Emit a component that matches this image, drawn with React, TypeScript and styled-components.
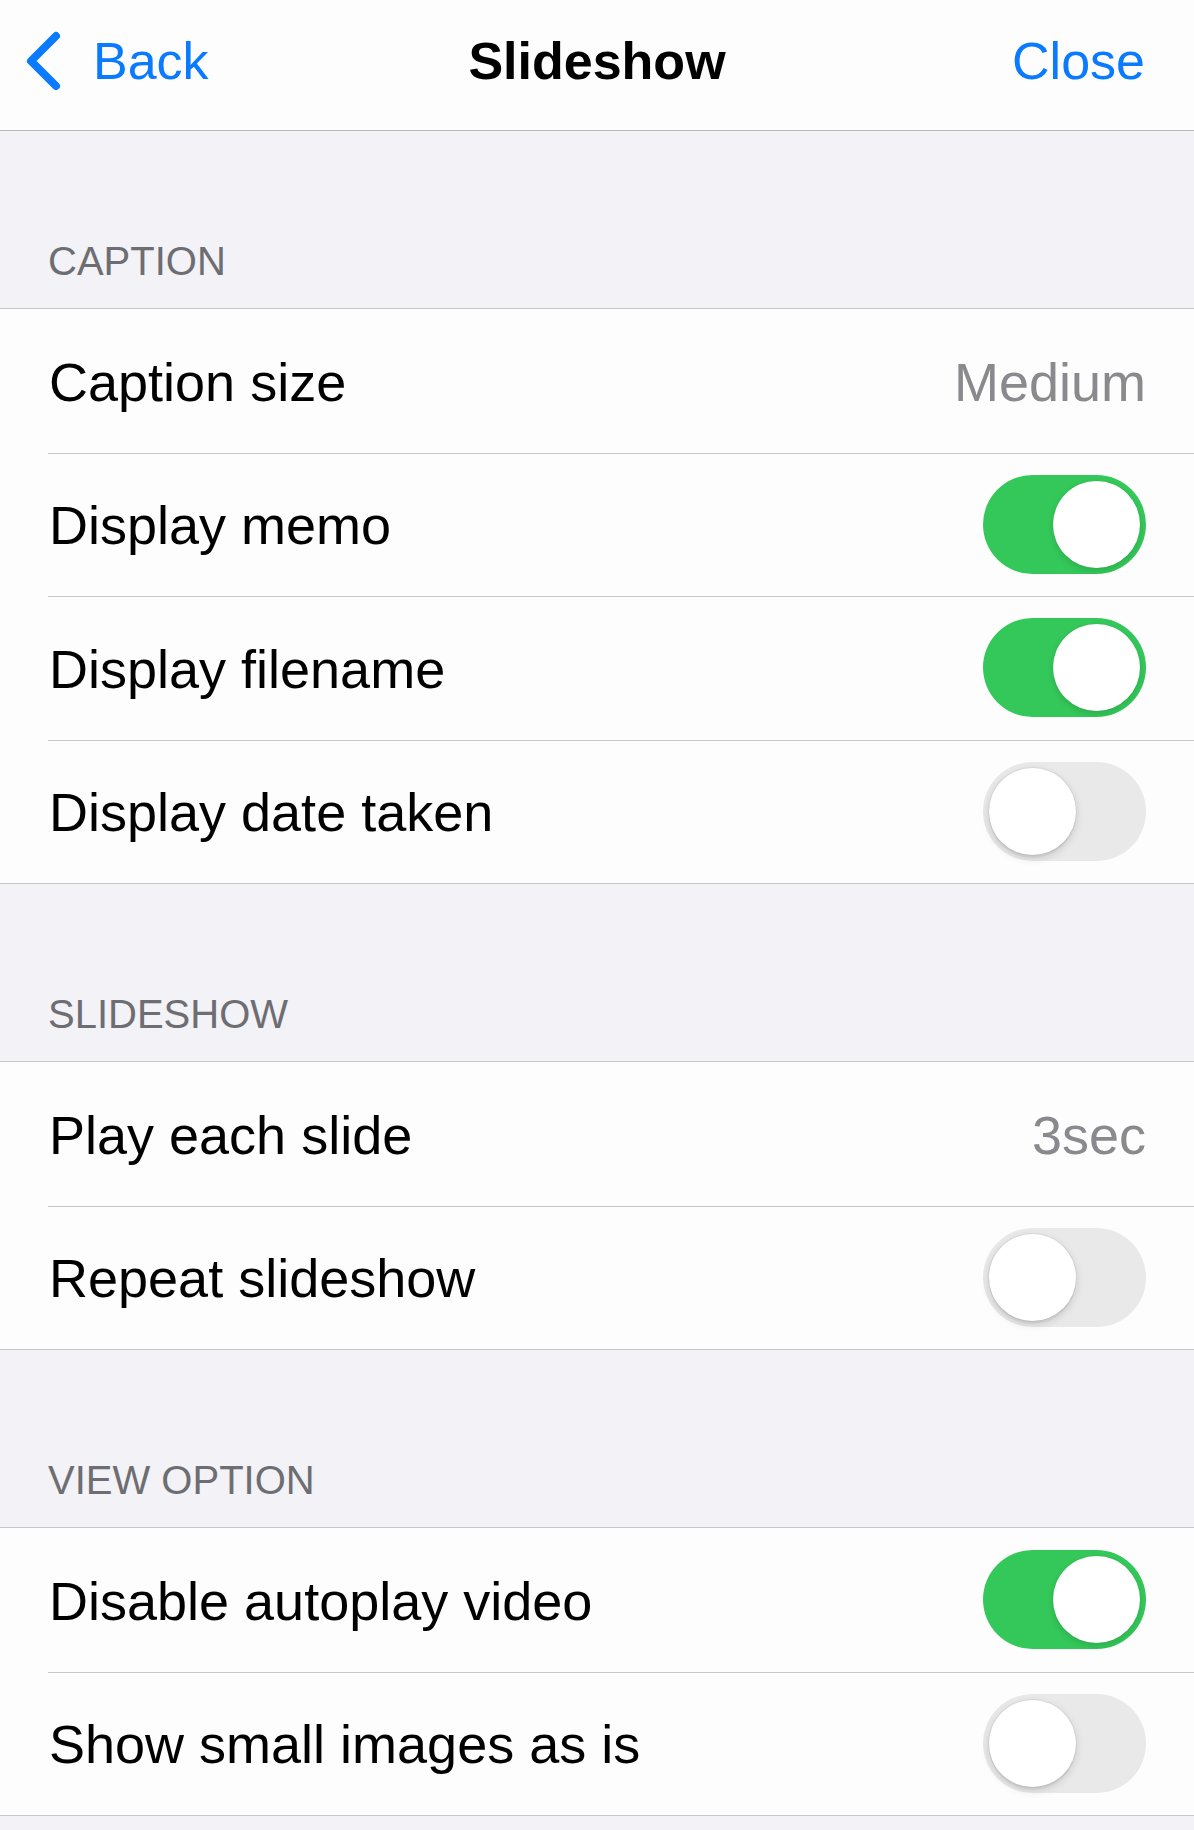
import React from "react";
import styled, { createGlobalStyle } from "styled-components";

const GlobalStyle = createGlobalStyle`
  html, body {
    margin: 0;
    padding: 0;
    background: #f2f2f7;
  }
  body {
    font-family: "Liberation Sans", Arial, sans-serif;
    -webkit-font-smoothing: antialiased;
  }
`;

const Page = styled.div`
  width: 1194px;
  min-height: 1830px;
  background: #f2f2f7;
  display: flex;
  flex-direction: column;
`;

const NavBar = styled.header`
  height: 131px;
  box-sizing: border-box;
  padding: 0 49px 9px 49px;
  background: #fdfdfd;
  border-bottom: 1px solid #b9b9bd;
  display: grid;
  grid-template-columns: 1fr auto 1fr;
  align-items: center;
`;

const NavButton = styled.button<{ $align: "start" | "end" }>`
  justify-self: ${(p) => p.$align};
  margin-left: ${(p) => (p.$align === "start" ? "-24px" : "0")};
  display: flex;
  align-items: center;
  gap: 32px;
  background: none;
  border: none;
  padding: 0;
  font-family: "Liberation Sans", Arial, sans-serif;
  font-size: 52px;
  color: #0a7aff;
  cursor: pointer;
`;

const NavTitle = styled.h1`
  margin: 0;
  font-family: "Liberation Sans", Arial, sans-serif;
  font-size: 52px;
  font-weight: 700;
  color: #000;
`;

const SectionHeader = styled.div`
  height: 177px;
  box-sizing: border-box;
  padding: 0 48px 23px;
  display: flex;
  align-items: flex-end;
  font-size: 40px;
  line-height: 48px;
  color: #6d6d72;
  text-transform: uppercase;
`;

const List = styled.section`
  background: #fdfdfd;
  border-top: 1px solid #c8c8cc;
  border-bottom: 1px solid #c8c8cc;
  display: flex;
  flex-direction: column;
`;

const Row = styled.div`
  position: relative;
  height: 143.5px;
  box-sizing: border-box;
  padding: 2px 48px 0 49px;
  display: flex;
  align-items: center;
  justify-content: space-between;

  & + &::before {
    content: "";
    position: absolute;
    top: 0;
    left: 48px;
    right: 0;
    height: 1px;
    background: #c8c8cc;
  }
`;

const Label = styled.span`
  font-size: 54px;
  color: #000;
`;

const Value = styled.span`
  font-size: 54px;
  color: #8a8a8e;
`;

const Track = styled.div<{ $on: boolean }>`
  position: relative;
  width: 163px;
  height: 99px;
  border-radius: 50px;
  margin-top: -2px;
  background: ${(p) => (p.$on ? "#34c759" : "#e9e9ea")};
  display: flex;
  align-items: center;
  justify-content: ${(p) => (p.$on ? "flex-end" : "flex-start")};
  padding: 0 6px;
  box-sizing: border-box;
`;

const Knob = styled.div<{ $on: boolean }>`
  width: 87px;
  height: 87px;
  border-radius: 50%;
  background: #ffffff;
  box-shadow: ${(p) =>
    p.$on
      ? "0 3px 6px rgba(0,0,0,0.12), 0 0 0 0.5px rgba(0,0,0,0.04)"
      : "0 0 0 1px rgba(0,0,0,0.05), 0 3px 8px rgba(0,0,0,0.15), 0 3px 1px rgba(0,0,0,0.04)"};
`;

const Toggle: React.FC<{ on: boolean }> = ({ on }) => (
  <Track $on={on}>
    <Knob $on={on} />
  </Track>
);

const Chevron = () => (
  <svg width="36" height="60" viewBox="0 0 36 60" aria-hidden="true">
    <path
      d="M31 5 L6 30 L31 55"
      fill="none"
      stroke="#0a7aff"
      strokeWidth="8"
      strokeLinecap="round"
      strokeLinejoin="round"
    />
  </svg>
);

type Item =
  | { label: string; value: string }
  | { label: string; toggle: boolean };

const sections: { title: string; items: Item[] }[] = [
  {
    title: "Caption",
    items: [
      { label: "Caption size", value: "Medium" },
      { label: "Display memo", toggle: true },
      { label: "Display filename", toggle: true },
      { label: "Display date taken", toggle: false },
    ],
  },
  {
    title: "Slideshow",
    items: [
      { label: "Play each slide", value: "3sec" },
      { label: "Repeat slideshow", toggle: false },
    ],
  },
  {
    title: "View option",
    items: [
      { label: "Disable autoplay video", toggle: true },
      { label: "Show small images as is", toggle: false },
    ],
  },
];

export default function App() {
  return (
    <>
      <GlobalStyle />
      <Page>
        <NavBar>
          <NavButton $align="start">
            <Chevron />
            Back
          </NavButton>
          <NavTitle>Slideshow</NavTitle>
          <NavButton $align="end">Close</NavButton>
        </NavBar>
        {sections.map((s) => (
          <React.Fragment key={s.title}>
            <SectionHeader>{s.title}</SectionHeader>
            <List>
              {s.items.map((it) => (
                <Row key={it.label}>
                  <Label>{it.label}</Label>
                  {"value" in it ? (
                    <Value>{it.value}</Value>
                  ) : (
                    <Toggle on={it.toggle} />
                  )}
                </Row>
              ))}
            </List>
          </React.Fragment>
        ))}
      </Page>
    </>
  );
}
